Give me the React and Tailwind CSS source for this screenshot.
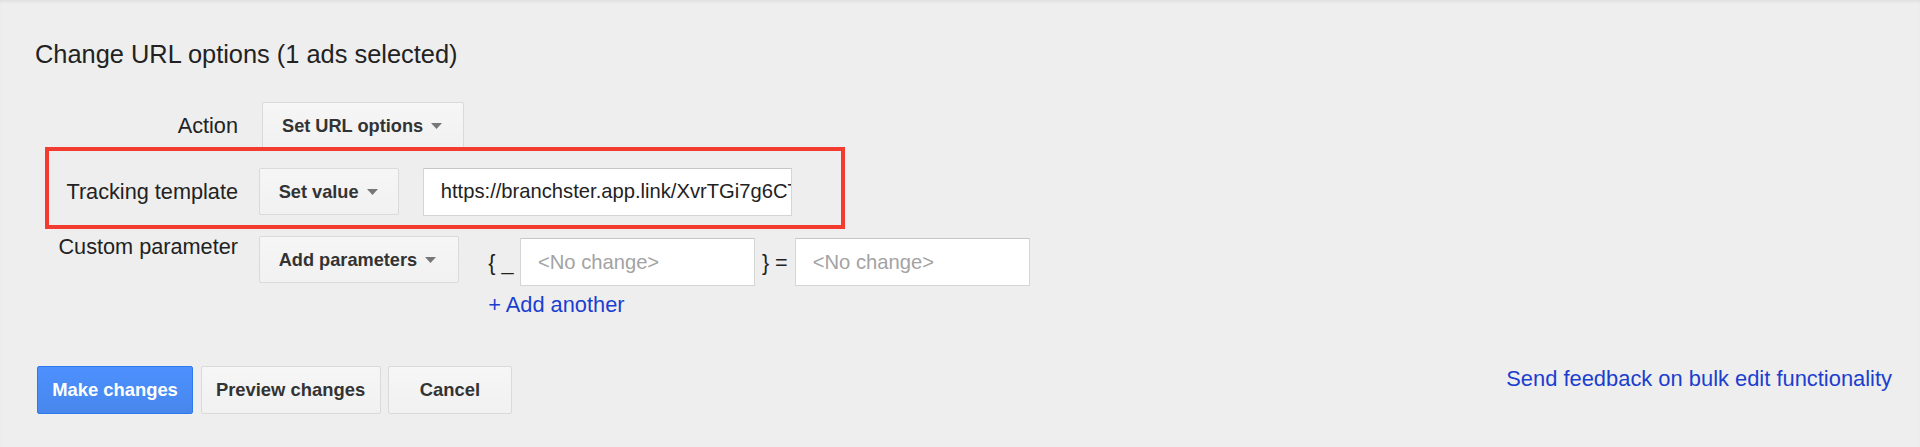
import React from "react";

function Caret() {
  return (
    <svg width="11" height="6" viewBox="0 0 11 6" className="shrink-0">
      <path d="M0 0 L11 0 L5.5 6 Z" fill="#777777" />
    </svg>
  );
}

function DropButton({ label, className }) {
  return (
    <div
      className={
        "flex h-[47px] shrink-0 items-center gap-[8px] whitespace-nowrap rounded-[2px] border border-[#dadada] bg-gradient-to-b from-[#f6f6f6] to-[#f1f1f1] pl-[19px] text-[18.2px] font-bold text-[#333333] " +
        className
      }
    >
      <span className="leading-[22px]">{label}</span>
      <Caret />
    </div>
  );
}

function Field({ children, className, placeholder }) {
  return (
    <div
      className={
        "flex h-[47.5px] shrink-0 items-center overflow-hidden whitespace-nowrap border border-[#d5d5d5] border-t-[#c6c6c6] bg-white text-[20.2px] leading-[25px] " +
        (placeholder ? "pl-[17px] text-[#a3a3a3] " : "pl-[16.5px] text-[#222222] ") +
        className
      }
    >
      {children}
    </div>
  );
}

function ActionButton({ children, primary, className }) {
  return (
    <div
      className={
        "flex h-[48px] shrink-0 items-center justify-center whitespace-nowrap rounded-[2px] border px-0 text-[18.4px] font-bold leading-[22px] " +
        (primary
          ? "border-[#3079ed] bg-gradient-to-b from-[#4d90fe] to-[#4787ed] text-white "
          : "border-[#dadada] bg-gradient-to-b from-[#f6f6f6] to-[#f1f1f1] text-[#333333] ") +
        (className || "")
      }
    >
      {children}
    </div>
  );
}

export default function App() {
  return (
    <div className="h-[447px] w-full overflow-hidden bg-[#eeeeee] font-['Liberation_Sans',Arial,sans-serif] text-[#222222] shadow-[inset_0_3px_3px_-1px_rgba(0,0,0,0.06)]">
      <div className="pt-[39.5px]">
        <h1 className="pl-[35px] text-[25.4px] font-normal leading-[29px]">
          Change URL options (1 ads selected)
        </h1>

        {/* Action row */}
        <div className="mt-[33.5px] flex items-center">
          <div className="w-[238px] text-right text-[21.7px] leading-[25px]">Action</div>
          <DropButton label="Set URL options" className="ml-[24px] w-[202px]" />
        </div>

        {/* Tracking template row */}
        <div className="relative mt-[19px] flex h-[47.5px] items-center">
          <div className="w-[238px] text-right text-[21.7px] leading-[25px]">Tracking template</div>
          <DropButton label="Set value" className="ml-[20.7px] w-[140px]" />
          <Field className="ml-[24.6px] w-[368.4px]">
            https://branchster.app.link/XvrTGi7g6CTb?utm_source=adwords
          </Field>
          <div className="pointer-events-none absolute left-[45px] top-[-21px] h-[82px] w-[800px] border-[4px] border-[#f33b30]" />
        </div>

        {/* Custom parameter row */}
        <div className="mt-[20.5px] flex items-start">
          <div className="w-[238px] text-right text-[21.7px] leading-[22px]">Custom parameter</div>
          <DropButton label="Add parameters" className="ml-[20.7px] w-[200.5px]" />
          <div className="ml-[29px] mt-[2.3px] flex flex-col">
            <div className="flex items-center">
              <span className="text-[21.6px] leading-[25px] whitespace-pre">{"{ _"}</span>
              <Field placeholder className="ml-[6.5px] w-[234.6px]">
                &lt;No change&gt;
              </Field>
              <span className="ml-[7.4px] text-[21.6px] leading-[25px] whitespace-pre">{"} ="}</span>
              <Field placeholder className="ml-[7px] w-[234.8px]">
                &lt;No change&gt;
              </Field>
            </div>
            <a className="mt-[6px] text-[21.8px] leading-[25px] text-[#1b3ecf]">+ Add another</a>
          </div>
        </div>

        {/* Bottom buttons */}
        <div className="mt-[49.2px] flex items-start justify-between pl-[37px] pr-[28px]">
          <div className="flex gap-[7.5px]">
            <ActionButton primary className="w-[156px]">Make changes</ActionButton>
            <ActionButton className="w-[180px]">Preview changes</ActionButton>
            <ActionButton className="w-[124px]">Cancel</ActionButton>
          </div>
          <a className="text-[21.9px] leading-[25px] text-[#1b3ecf]">
            Send feedback on bulk edit functionality
          </a>
        </div>
      </div>
    </div>
  );
}
